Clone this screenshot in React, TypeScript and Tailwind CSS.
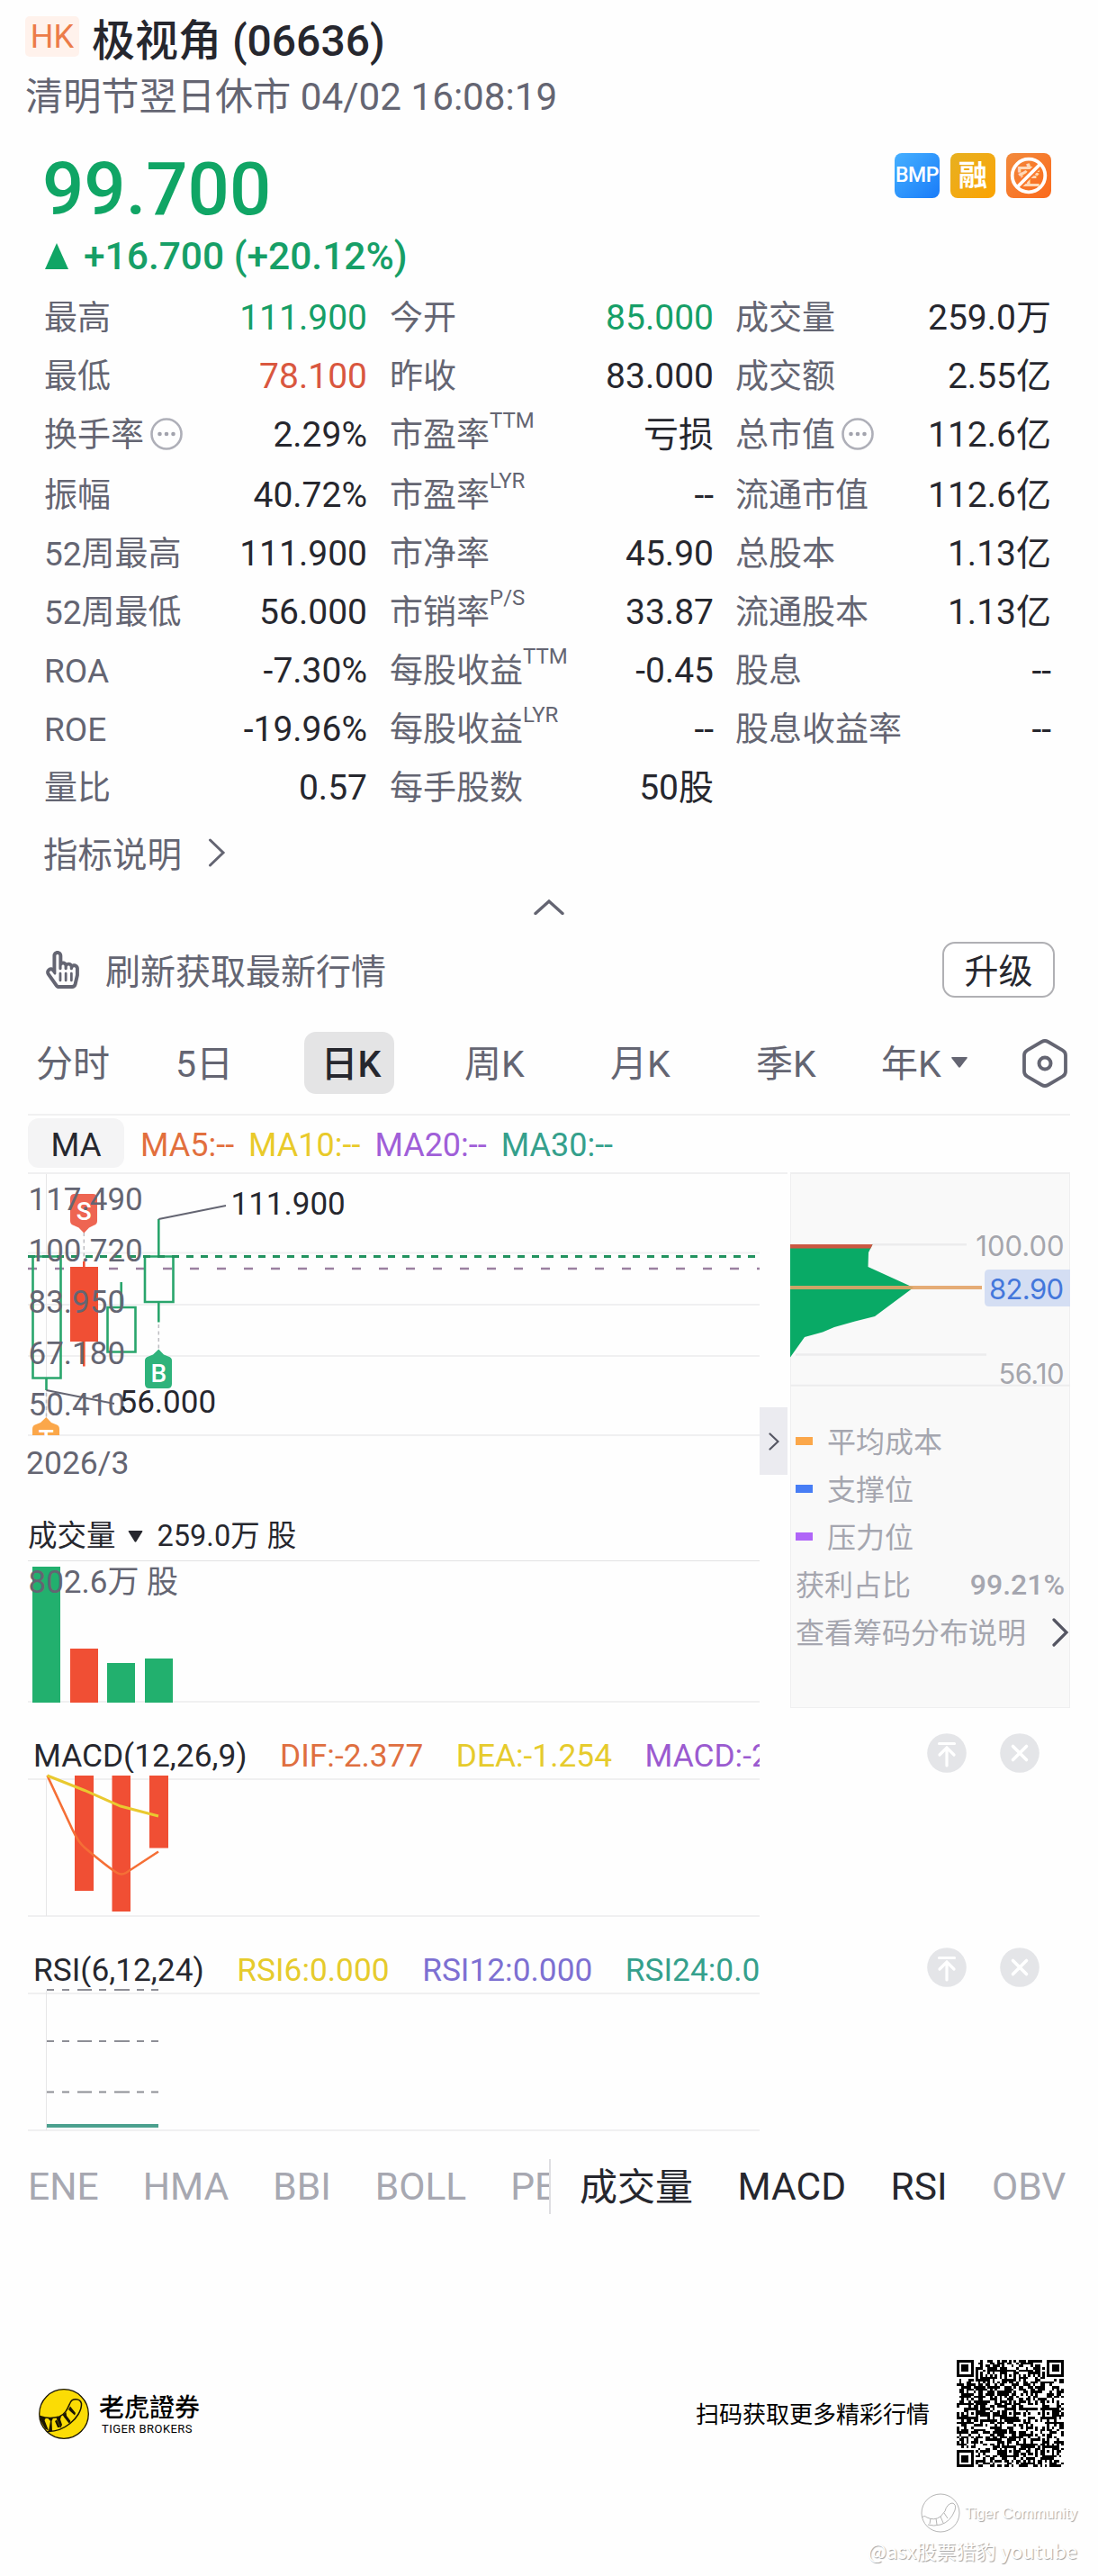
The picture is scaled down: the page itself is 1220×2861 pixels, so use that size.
import React from "react";
import { FaRegHandPointer } from "react-icons/fa";

interface StatProps {
  label: string;
  value: string;
  sup?: string;
  info?: boolean;
  color?: string;
}

const columns: StatProps[][] = [
  [
    { label: "最高", value: "111.900", color: "text-[#169f67]" },
    { label: "最低", value: "78.100", color: "text-[#d9573f]" },
    { label: "换手率", value: "2.29%", info: true },
    { label: "振幅", value: "40.72%" },
    { label: "52周最高", value: "111.900" },
    { label: "52周最低", value: "56.000" },
    { label: "ROA", value: "-7.30%" },
    { label: "ROE", value: "-19.96%" },
    { label: "量比", value: "0.57" },
  ],
  [
    { label: "今开", value: "85.000", color: "text-[#169f67]" },
    { label: "昨收", value: "83.000" },
    { label: "市盈率", sup: "TTM", value: "亏损" },
    { label: "市盈率", sup: "LYR", value: "--" },
    { label: "市净率", value: "45.90" },
    { label: "市销率", sup: "P/S", value: "33.87" },
    { label: "每股收益", sup: "TTM", value: "-0.45" },
    { label: "每股收益", sup: "LYR", value: "--" },
    { label: "每手股数", value: "50股" },
  ],
  [
    { label: "成交量", value: "259.0万" },
    { label: "成交额", value: "2.55亿" },
    { label: "总市值", value: "112.6亿", info: true },
    { label: "流通市值", value: "112.6亿" },
    { label: "总股本", value: "1.13亿" },
    { label: "流通股本", value: "1.13亿" },
    { label: "股息", value: "--" },
    { label: "股息收益率", value: "--" },
  ],
];

const StatRow: React.FC<StatProps> = ({ label, value, sup, info, color }) => (
  <div className="flex h-[65px] items-center justify-between whitespace-nowrap leading-[65px] nth-4:mt-[2px]">
    <span className="-ml-px flex items-center text-[37px] text-[#646572]">
      {label}
      {sup && (
        <span className="relative -top-[16px] text-[24px]">{sup}</span>
      )}
      {info && (
        <svg className="ml-[7px] -mt-[4px] h-9 w-9" viewBox="0 0 36 36">
          <circle cx="18" cy="18" r="16.5" fill="none" stroke="#aeafb8" strokeWidth="2.6" />
          <g fill="#a2a3ad">
            <circle cx="10.5" cy="18" r="2.3" />
            <circle cx="18" cy="18" r="2.3" />
            <circle cx="25.5" cy="18" r="2.3" />
          </g>
        </svg>
      )}
    </span>
    <span className={`text-[39px] ${color ?? "text-[#26272e]"}`}>{value}</span>
  </div>
);

const Badges = () => (
  <div className="flex gap-3">
    <div className="flex h-[50px] w-[50px] items-center justify-center rounded-[8px] bg-linear-to-br from-[#46b0ff] to-[#1a7bf8] text-[23px] font-medium tracking-[-0.5px] text-white">
      BMP
    </div>
    <div className="flex h-[50px] w-[50px] items-center justify-center rounded-[8px] bg-linear-to-br from-[#e7b01f] to-[#fba300] text-[32px] font-bold leading-[50px] text-white">
      融
    </div>
    <svg className="h-[50px] w-[50px]" viewBox="0 0 50 50">
      <defs>
        <linearGradient id="noShort" x1="0" y1="0" x2="1" y2="1">
          <stop offset="0" stopColor="#f28a3c" />
          <stop offset="1" stopColor="#fb6a1c" />
        </linearGradient>
      </defs>
      <rect width="50" height="50" rx="8" fill="url(#noShort)" />
      <text x="25" y="35" textAnchor="middle" fontSize="27" fontWeight="700" fill="#ffd9b8">
        空
      </text>
      <path d="M12 38L38 12" stroke="#fb7a2c" strokeWidth="8" />
      <circle cx="25" cy="25" r="18.3" fill="none" stroke="#fff" strokeWidth="3.8" />
      <path d="M12 38L38 12" stroke="#fff" strokeWidth="3.8" />
    </svg>
  </div>
);

const axis = [
  { y: 1343.5, text: "117.490" },
  { y: 1400.5, text: "100.720" },
  { y: 1457.5, text: "83.950" },
  { y: 1514.5, text: "67.180" },
  { y: 1571.5, text: "50.410" },
];

const PriceChart = () => (
  <svg className="block h-[293px] w-[813px]" viewBox="31 1302 813 293">
    <g stroke="#f0f0f1" strokeWidth="2">
      <path d="M31 1391.5H844M31 1449H844M31 1506H844M31 1594H844" />
      <path d="M51.5 1304V1594" stroke="#e6e6e8" strokeWidth="1" />
    </g>
    <path d="M31 1409H844" stroke="#9a80a0" strokeWidth="2.6" strokeDasharray="10 20" />
    <g fill="none" stroke="#29a56c" strokeWidth="2.6">
      <path d="M36.5 1395.5H67.5V1530.5H36.5ZM51.5 1531V1544" />
      <path d="M119.5 1452H150.5V1501.5H119.5ZM134.7 1424V1452" />
      <path d="M161 1395.5H192.5V1446H161ZM176.3 1354V1395M176.3 1446V1468.5" />
    </g>
    <path d="M78 1407H109V1490H78ZM92 1401H94.6V1407H92ZM92 1490H94.6V1517.5H92Z" fill="#f04f34" />
    <path d="M31 1395.5H844" stroke="#22925f" strokeWidth="3" strokeDasharray="8 8" />
    <g stroke="#bdbdc2" strokeWidth="1.5" strokeDasharray="4 3.5">
      <path d="M93.3 1369V1401M176.3 1471V1499M51.5 1547V1575" />
    </g>
    <g fontSize="28" fontWeight="500" fill="#fff" textAnchor="middle">
      <path d="M83 1326H103Q108 1326 108 1331V1356Q108 1360 104 1361L99 1363.5L93.3 1369.5L87.5 1363.5L82 1361Q78 1360 78 1356V1331Q78 1326 83 1326Z" fill="#ee6552" />
      <text x="93.3" y="1355">S</text>
      <path d="M176.3 1498.5L182 1504.5L187 1506.5Q191 1507.5 191 1511V1537Q191 1542 186 1542H166Q161 1542 161 1537V1511Q161 1507.5 165 1506.5L170 1504.5Z" fill="#2fb37b" />
      <text x="176.3" y="1535">B</text>
      <path d="M51.3 1574L57 1580L62 1582Q66 1583 66 1587V1594H36V1587Q36 1583 40 1582L45 1580Z" fill="#fba74a" />
      <text x="51.3" y="1608">T</text>
    </g>
    <path d="M176.3 1354L251 1339M51.5 1544L127 1559" fill="none" stroke="#646572" strokeWidth="1.8" />
    <g fontSize="35" fill="#646572">
      {axis.map(({ y, text }) => (
        <text key={text} x="31.5" y={y}>
          {text}
        </text>
      ))}
    </g>
    <g fontSize="35" fill="#26272e">
      <text x="256.5" y="1349">111.900</text>
      <text x="132.5" y="1568.5">56.000</text>
    </g>
  </svg>
);

const VolumeChart = () => (
  <svg className="block h-[160px] w-[813px]" viewBox="31 1732 813 160">
    <path d="M31 1733.5H844" stroke="#e2e2e4" strokeWidth="1" />
    <path d="M31 1890H844" stroke="#f0f0f1" strokeWidth="2" />
    <path d="M36 1740H67V1891H36ZM119 1847H150V1891H119ZM161 1842H192V1891H161Z" fill="#22b06e" />
    <path d="M78 1831H109V1891H78Z" fill="#f04f34" />
    <text x="31.5" y="1769" fontSize="35" fill="#646572">
      802.6万 股
    </text>
  </svg>
);

const MacdChart = () => (
  <svg className="block h-[160px] w-[813px]" viewBox="31 1970 813 160">
    <path d="M31 1976H844M31 2128H844" stroke="#f0f0f1" strokeWidth="2" />
    <path d="M51.5 1976V2128" stroke="#e6e6e8" strokeWidth="1" />
    <path d="M83 1972H104V2100H83ZM124.5 1972H145V2123H124.5ZM166 1972H187V2052.5H166Z" fill="#f04f34" />
    <g fill="none" strokeWidth="2.6">
      <path d="M52.5 1972L80 2031Q87 2046 94 2052Q120 2074 130 2080Q135 2083 140 2080L176 2056.5" stroke="#f56f36" />
      <path d="M52.5 1972L94 1988.5L134 2006L176 2017" stroke="#e9c92f" strokeWidth="3" />
    </g>
  </svg>
);

const RsiChart = () => (
  <svg className="block h-[161px] w-[813px]" viewBox="31 2207 813 161">
    <path d="M31 2214H844M31 2366H844" stroke="#f0f0f1" strokeWidth="2" />
    <path d="M51.5 2211V2366" stroke="#e6e6e8" strokeWidth="1" />
    <path
      d="M52 2210H176M52 2267H176M52 2323.5H176"
      stroke="#8e8f96"
      strokeWidth="2"
      strokeDasharray="8 9 8 9 16 8 8 9 17 8 8 8 8 99"
    />
    <path d="M52 2361H176" stroke="#4ba08e" strokeWidth="4" />
  </svg>
);

const PaneButtons = () => (
  <div className="ml-[186px] flex gap-[37px]">
    <svg className="h-11 w-11" viewBox="0 0 44 44">
      <circle cx="22" cy="22" r="21.8" fill="#e4e5e8" />
      <path
        d="M13.5 11.5H30.5M22 36V16.5M14 24L22 16L30 24"
        fill="none"
        stroke="#fff"
        strokeWidth="3.2"
        strokeLinecap="round"
      />
    </svg>
    <svg className="h-11 w-11" viewBox="0 0 44 44">
      <circle cx="22" cy="22" r="21.8" fill="#e4e5e8" />
      <path d="M14.5 14.5L29.5 29.5M29.5 14.5L14.5 29.5" stroke="#fff" strokeWidth="3.6" strokeLinecap="round" />
    </svg>
  </div>
);

interface PaneHeaderProps {
  items: { text: string; color: string }[];
}

const PaneHeader: React.FC<PaneHeaderProps> = ({ items }) => (
  <div className="flex h-11 items-center">
    <div className="flex h-11 w-[813px] gap-[36.5px] overflow-hidden whitespace-nowrap pl-[6px] pt-[3px] text-[35.3px] leading-[41px]">
      {items.map(({ text, color }) => (
        <span key={text} className={`pt-[1.5px] ${color}`}>
          {text}
        </span>
      ))}
    </div>
    <PaneButtons />
  </div>
);

const legend = [
  { text: "平均成本", color: "bg-[#fba74a]" },
  { text: "支撑位", color: "bg-[#477df5]" },
  { text: "压力位", color: "bg-[#b065f8]" },
];

const ChipPanel = () => (
  <div className="ml-[3px] h-[595px] w-[311px] border border-t-2 border-[#efeff0] bg-[#f9f9f9] text-[32px] text-[#a5a6af]">
    <svg className="-ml-px block h-[238px] w-[311px]" viewBox="878 1304 311 238">
      <g stroke="#ececed" strokeWidth="2.6">
        <path d="M969 1382.3H1074M884 1504.5H1096" />
        <path d="M878 1538.7H1189" strokeWidth="2" />
      </g>
      <path
        d="M878 1382H969.5L965 1391L964.5 1407L1015 1430L972 1462L950 1467.5L927 1474L914 1479.5L894 1485L878 1507.5Z"
        fill="#09aa66"
      />
      <path d="M878 1382H969.5L967.5 1386.5H878Z" fill="#cb5843" />
      <path d="M878 1430H1091" stroke="#e3a468" strokeWidth="4" opacity="0.9" />
      <path d="M1189 1410H1099Q1094 1410 1094 1415V1446Q1094 1451 1099 1451H1189Z" fill="#d4def3" />
      <g className="font-['Inter',sans-serif]" fontSize="31" letterSpacing="-0.6" textAnchor="end" fill="#a5a6ad">
        <text x="1182.5" y="1395" letterSpacing="0">100.00</text>
        <text x="1181.5" y="1442.5" fill="#4477db">82.90</text>
        <text x="1182" y="1536.5">56.10</text>
      </g>
    </svg>
    <div className="mt-[32px] flex flex-col">
      {legend.map(({ text, color }) => (
        <div key={text} className="flex h-[53px] items-center pl-[5px]">
          <span className={`h-[9px] w-[19px] ${color}`} />
          <span className="ml-[16px] pt-[3px] leading-[50px]">{text}</span>
        </div>
      ))}
      <div className="flex h-[53px] items-center justify-between pl-[5px] pr-[5px] leading-[50px]">
        <span className="pt-[3px]">获利占比</span>
        <span className="pt-[1px] text-[32px] font-medium">99.21%</span>
      </div>
      <div className="flex h-[53px] items-center justify-between pl-[5px] leading-[50px]">
        <span className="pt-[3px]">查看筹码分布说明</span>
        <svg className="h-8 w-5" viewBox="0 0 20 32">
          <path d="M3 2L17 16L3 30" fill="none" stroke="#555663" strokeWidth="3.2" strokeLinecap="round" />
        </svg>
      </div>
    </div>
  </div>
);

const SIZE = 45;
const centers = [6, 22, 38];

// finder and alignment squares first, everything else is noise
const isDark = (x: number, y: number) => {
  for (const [fx, fy] of [[3, 3], [SIZE - 4, 3], [3, SIZE - 4]]) {
    const d = Math.max(Math.abs(x - fx), Math.abs(y - fy));
    if (d <= 4) return d !== 4 && d !== 2;
  }
  for (const cx of centers) {
    for (const cy of centers) {
      const corner =
        (cx === 6 && cy === 6) || (cx === 38 && cy === 6) || (cx === 6 && cy === 38);
      const d = Math.max(Math.abs(x - cx), Math.abs(y - cy));
      if (!corner && d <= 2) return d !== 1;
    }
  }
  if (x === 6 || y === 6) return (x + y) % 2 === 0;
  let h = (x * 374761393 + y * 668265263 + 1274126177) | 0;
  h = Math.imul(h ^ (h >>> 13), 1274126177);
  h ^= h >>> 16;
  return (h & 255) < 136;
};

const QrCode = () => {
  let d = "";
  for (let y = 0; y < SIZE; y++) {
    for (let x = 0; x < SIZE; x++) {
      if (isDark(x, y)) d += `M${x} ${y}h1v1h-1z`;
    }
  }
  return (
    <svg className="h-[119px] w-[119px]" viewBox="0 0 45 45" shapeRendering="crispEdges">
      <path d={d} fill="#000" />
    </svg>
  );
};

const TigerLogo = () => (
  <svg className="h-14 w-14" viewBox="0 0 56 56">
    <circle cx="28" cy="28" r="27.3" fill="#fbdc05" stroke="#1a1503" strokeWidth="1.3" />
    <path
      d="M1 30.5Q12 34 23 31C30 28 32 22 35 15.5C37 10.5 46 10 47.5 16.5C48 24 42 33 35 38.5C28 44 20 48 9.5 47.5"
      fill="none"
      stroke="#1a1503"
      strokeWidth="1.5"
    />
    <path
      d="M1 30.5L8 32.5L6.5 35L11 46.5L7 44.5L2.5 36ZM10.5 33L16 32.5L14.5 36L15 47H11L13 36ZM19.5 32.5L25 30.5L24 34L26 40L24.5 43.5L21 36ZM26.5 29L30.5 26L31 30L35.5 36L34 39L28.5 32ZM33 23L35 19.5L41 27L40 29.5L35 25ZM18 36L20 34.5L24 43L21 43Z"
      fill="#1a1503"
    />
  </svg>
);

const periods = [
  { text: "周K", width: "w-[162px]" },
  { text: "月K", width: "w-[162px]" },
  { text: "季K", width: "w-[139px]" },
];

const App = () => (
  <div className="h-[2861px] w-[1220px] overflow-hidden bg-[#fefefe] font-['Roboto','Noto_Sans_CJK_SC',sans-serif] text-[#26272e]">
    <div className="flex items-start pl-[28px] pt-[18px]">
      <span className="h-[45px] w-[60px] rounded-[5px] bg-[#fff2ec] text-center text-[36px] leading-[47px] text-[#ec7c49]">
        HK
      </span>
      <h1 className="ml-[14px] text-[48px] font-medium leading-[55px]">极视角 (06636)</h1>
    </div>
    <div className="ml-[28px] mt-[10px] text-[42.2px] leading-[50px] text-[#646572]">
      清明节翌日休市 04/02 16:08:19
    </div>

    <div className="mt-[37px] pl-[50px] pr-[52px]">
      <div className="flex justify-between">
        <span className="-ml-[3px] pt-[1px] text-[81.5px] font-medium leading-[79px] text-[#10a565]">99.700</span>
        <Badges />
      </div>
      <div className="mt-3 flex h-11 items-center text-[42.5px] font-medium leading-[44px] text-[#169f67]">
        <svg className="h-[29px] w-[26px]" viewBox="0 0 26 29">
          <path d="M13 0L26 29H0Z" fill="#10a565" />
        </svg>
        <span className="ml-[17px] pt-[1px]">+16.700 (+20.12%)</span>
      </div>

      <div className="mt-[15px] flex">
        <div className="w-[358px]">
          {columns[0].map((s) => <StatRow key={s.label} {...s} />)}
        </div>
        <div className="ml-[26px] w-[359px]">
          {columns[1].map((s) => <StatRow key={s.label + s.sup} {...s} />)}
        </div>
        <div className="ml-[25px] w-[350px]">
          {columns[2].map((s) => <StatRow key={s.label} {...s} />)}
        </div>
      </div>

      <div className="-ml-[2px] mt-[16px] flex h-[50px] items-center text-[38.5px] leading-[50px] text-[#646572]">
        <span className="pt-[2px]">指标说明</span>
        <svg className="-mt-[4px] ml-[29px] h-8 w-5" viewBox="0 0 20 32">
          <path d="M2.5 2L17 16L2.5 30" fill="none" stroke="#646572" strokeWidth="3" strokeLinecap="round" />
        </svg>
      </div>
    </div>

    <div className="mt-[25px] flex justify-center">
      <svg className="h-[17px] w-[34px]" viewBox="0 0 34 17">
        <path d="M2 15.5L17 2L32 15.5" fill="none" stroke="#646572" strokeWidth="3.4" strokeLinecap="round" />
      </svg>
    </div>

    <div className="mt-[30px] flex h-[62px] items-center pl-[51px] pr-[48px] leading-[50px]">
      <FaRegHandPointer className="h-[42px] w-[37px] text-[#646572]" />
      <span className="ml-[29px] pt-[5px] text-[39px] text-[#646572]">刷新获取最新行情</span>
      <button className="ml-auto h-[62px] w-[125px] rounded-[14px] border-2 border-[#b0b0b4] bg-white pt-[4px] text-[38px] leading-[54px]">
        升级
      </button>
    </div>

    <div className="mt-[38px] flex h-[69px] items-center pl-[40px] text-[41px] leading-[66px] text-[#646572]">
      <span className="w-[155px] pt-[3px]">分时</span>
      <span className="w-[143px] pt-[3px]">5日</span>
      <span className="mr-[78px] h-[69px] w-[100px] rounded-[13px] bg-[#e4e4e5] pl-[4px] pt-[3px] text-center font-medium text-[#26272e]">
        日K
      </span>
      {periods.map(({ text, width }) => (
        <span key={text} className={`pt-[3px] ${width}`}>
          {text}
        </span>
      ))}
      <span className="flex w-[157px] items-center pt-[3px]">
        年K
        <svg className="-mt-[4px] ml-[11px] h-[12px] w-[18px]" viewBox="0 0 16 12" preserveAspectRatio="none">
          <path d="M1 0H15Q16.5 0 15.5 1.5L9 11Q8 12.5 7 11L0.5 1.5Q-0.5 0 1 0Z" fill="#646572" />
        </svg>
      </span>
      <svg className="h-[54px] w-[50px]" viewBox="0 0 50 54">
        <path
          d="M21.5 3Q25 1 28.5 3L44.5 12.3Q48 14.3 48 18V36Q48 39.7 44.5 41.7L28.5 51Q25 53 21.5 51L5.5 41.7Q2 39.7 2 36V18Q2 14.3 5.5 12.3Z"
          fill="none"
          stroke="#646572"
          strokeWidth="3.8"
        />
        <circle cx="25" cy="27" r="6.5" fill="none" stroke="#646572" strokeWidth="4" />
      </svg>
    </div>

    <div className="ml-[31px] mt-[22px] w-[1158px]">
      <div className="h-[2px] bg-[#f0f0f1]" />
      <div className="mb-[5px] mt-[3px] flex h-[55px] items-center gap-[16px] text-[36px] leading-[52px]">
        <span className="mr-[2px] h-[55px] w-[107px] rounded-[12px] bg-[#f4f4f5] pt-[4px] text-center text-[36.5px]">
          MA
        </span>
        <span className="pt-[4px] text-[#e26f3d]">MA5:--</span>
        <span className="pt-[4px] text-[#e9ca2a]">MA10:--</span>
        <span className="pt-[4px] text-[#a05fd8]">MA20:--</span>
        <span className="pt-[4px] text-[#35a08c]">MA30:--</span>
      </div>

      <div className="flex">
        <div className="h-[595px] w-[813px]">
          <div className="h-[2px] bg-[#f0f0f1]" />
          <div className="-mt-[2px]">
            <PriceChart />
          </div>
          <div className="-ml-[2px] mt-[10px] pt-[1px] text-[35.5px] leading-[39px] text-[#646572]">2026/3</div>
          <div className="mt-[41px] flex h-[40px] items-center text-[32.5px] leading-[40px]">
            <span>成交量</span>
            <svg className="ml-[13px] h-[13px] w-[17px]" viewBox="0 0 16 13">
              <path d="M1 0H15Q16.5 0 15.5 1.5L9 12Q8 13.5 7 12L0.5 1.5Q-0.5 0 1 0Z" fill="#26272e" />
            </svg>
            <span className="ml-[16px]">259.0万 股</span>
          </div>
          <div className="mt-[6px]">
            <VolumeChart />
          </div>
        </div>
        <div className="w-[31px] border-t-2 border-[#f0f0f1]">
          <div className="mt-[259px] flex h-[75px] items-center justify-center bg-[#ebebf0]">
            <svg className="h-[20px] w-[12px]" viewBox="0 0 12 20">
              <path d="M1.5 1.5L10.5 10L1.5 18.5" fill="none" stroke="#555663" strokeWidth="2.2" strokeLinecap="round" />
            </svg>
          </div>
        </div>
        <ChipPanel />
      </div>

      <div className="mt-[28px]">
        <PaneHeader
          items={[
            { text: "MACD(12,26,9)", color: "text-[#26272e]" },
            { text: "DIF:-2.377", color: "text-[#df6f40]" },
            { text: "DEA:-1.254", color: "text-[#e6cb2c]" },
            { text: "MACD:-2.246", color: "text-[#9b5bd0]" },
          ]}
        />
        <div className="mt-px">
          <MacdChart />
        </div>
      </div>
      <div className="mt-[33px]">
        <PaneHeader
          items={[
            { text: "RSI(6,12,24)", color: "text-[#26272e]" },
            { text: "RSI6:0.000", color: "text-[#e6cb2c]" },
            { text: "RSI12:0.000", color: "text-[#7d70d2]" },
            { text: "RSI24:0.000", color: "text-[#35a08c]" },
          ]}
        />
        <RsiChart />
      </div>
    </div>

    <div className="mt-[30px] flex h-[61px] whitespace-nowrap text-[42.5px] leading-[61px] text-[#a7a8b1]">
      <div className="flex w-[612px] gap-[49px] overflow-hidden border-r-2 border-[#dedee2] pl-[31px]">
        <span>ENE</span>
        <span>HMA</span>
        <span>BBI</span>
        <span>BOLL</span>
        <span>PE</span>
      </div>
      <div className="flex gap-[49.5px] pl-[32px] text-[#26272e]">
        <span className="pt-[1px] text-[42px]">成交量</span>
        <span>MACD</span>
        <span>RSI</span>
        <span className="text-[#a7a8b1]">OBV</span>
      </div>
    </div>

    <div className="mt-[162px] flex h-[119px] items-center pl-[43px] pr-[38px] text-black">
      <TigerLogo />
      <div className="ml-[11px] flex flex-col">
        <span className="font-['Noto_Sans_CJK_TC',sans-serif] text-[28px] font-medium leading-[32px]">老虎證券</span>
        <span className="ml-[3px] mt-[2px] text-[13px] leading-[15px] tracking-[0.45px]">TIGER BROKERS</span>
      </div>
      <span className="ml-auto mr-[30px] pt-[3px] text-[26px] leading-[30px]">扫码获取更多精彩行情</span>
      <QrCode />
    </div>

    <div className="mt-[29px] flex flex-col items-end pr-[23px] text-white [text-shadow:1px_1px_1px_#a0a0a0]">
      <div className="flex h-11 items-center">
        <svg className="h-11 w-11" viewBox="0 0 44 44" fill="none" stroke="#b5b5b5" strokeWidth="1">
          <circle cx="22" cy="22" r="21" />
          <path d="M2 27Q3 24 7 27Q15 31 22 26L27 20Q29 12 35 11Q40 12 38 19Q33 32 22 35Q14 37 8 35" />
          <path d="M11 28L10 34M17 28L18 35M22 26L25 33M26 22L30 28" />
        </svg>
        <span className="ml-[5px] font-['Liberation_Sans',sans-serif] text-[16.5px]">Tiger Community</span>
      </div>
      <span className="mt-[3px] font-['Noto_Sans_CJK_SC',sans-serif] text-[22px] leading-[32px]">
        @asx股票猎豹 youtube
      </span>
    </div>
  </div>
);

export default App;
